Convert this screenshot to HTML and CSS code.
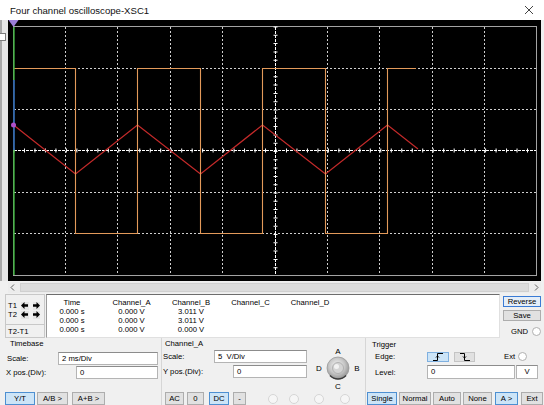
FILE: index.html
```html
<!DOCTYPE html>
<html lang="en">
<head>
<meta charset="utf-8">
<title>Four channel oscilloscope-XSC1</title>
<link rel="stylesheet" href="styles.css">
</head>
<body>
<div class="win">
  <header class="titlebar">
    <span class="title">Four channel oscilloscope-XSC1</span>
    <svg class="close" width="10" height="10" viewBox="0 0 10 10"><path d="M1 1L9 9M9 1L1 9" stroke="#444" stroke-width="1" fill="none"/></svg>
  </header>

  <div class="scoperow">
    <div class="edge"><div class="edgebox"></div></div>
    <div class="scope">
      <svg class="plot" width="533" height="261" viewBox="8 20 533 261">
        <rect x="13.5" y="26.5" width="523" height="249" fill="none" stroke="#a4a4a4"/>
        <path d="M65.5 27V275M117.5 27V275M170.5 27V275M222.5 27V275M327.5 27V275M379.5 27V275M432.5 27V275M484.5 27V275M14 68.5H536M14 109.5H536M14 192.5H536M14 233.5H536" stroke="#cfcfcf" stroke-dasharray="2 2" fill="none"/>
        <path d="M275.5 27V275M14 150.5H536" stroke="#ffffff" stroke-dasharray="3 1" fill="none"/>
        <path d="M13.5 150.5H537" stroke="#ffffff" stroke-width="4" stroke-dasharray="1 9.48" fill="none"/>
        <path d="M275.5 26.5V275.5" stroke="#ffffff" stroke-width="4" stroke-dasharray="1 7.3" fill="none"/>
        <path d="M13.5 125L75.5 174L137.5 125L200.5 174L262.5 125L325.5 174L387.5 125L418 149" stroke="#c42a2a" stroke-width="1.2" fill="none"/>
        <path d="M13.5 68.5H75.5V233.5H137.5V68.5H200.5V233.5H262.5V68.5H325.5V233.5H387.5V68.5H416" stroke="#e39a5a" stroke-width="1.1" fill="none"/>
        <path d="M14 27V275" stroke="#38b038" stroke-width="1.4" fill="none"/>
        <path d="M14 80V150" stroke="#2c4cc8" stroke-width="1.4" fill="none"/>
        <polygon points="8.5,20 18.5,20 13.5,27" fill="#9b7ed8"/>
        <circle cx="13.5" cy="125" r="2.5" fill="#b050c8"/>
      </svg>
    </div>
  </div>

  <div class="scrollbar">
    <svg class="sarrow" width="8" height="9" viewBox="0 0 8 9"><path d="M5 1.5L2 4.5L5 7.5" stroke="#606060" fill="none"/></svg>
    <div class="thumb"></div>
    <svg class="sarrow" width="8" height="9" viewBox="0 0 8 9"><path d="M3 1.5L6 4.5L3 7.5" stroke="#606060" fill="none"/></svg>
  </div>

  <div class="readrow">
    <div class="cursors">
      <div class="crow">
        <span class="clabel">T1</span>
        <span class="abtn"><svg width="7" height="7" viewBox="0 0 7 7"><path d="M0 3.5L3.5 0V2.3H7V4.7H3.5V7Z" fill="#000"/></svg></span>
        <span class="abtn"><svg width="7" height="7" viewBox="0 0 7 7"><path d="M7 3.5L3.5 0V2.3H0V4.7H3.5V7Z" fill="#000"/></svg></span>
      </div>
      <div class="crow">
        <span class="clabel">T2</span>
        <span class="abtn"><svg width="7" height="7" viewBox="0 0 7 7"><path d="M0 3.5L3.5 0V2.3H7V4.7H3.5V7Z" fill="#000"/></svg></span>
        <span class="abtn"><svg width="7" height="7" viewBox="0 0 7 7"><path d="M7 3.5L3.5 0V2.3H0V4.7H3.5V7Z" fill="#000"/></svg></span>
      </div>
      <div class="crow diff"><span>T2-T1</span></div>
    </div>
    <div class="readout">
      <div class="rgrid">
        <span>Time</span><span>Channel_A</span><span>Channel_B</span><span>Channel_C</span><span>Channel_D</span>
        <span>0.000 s</span><span>0.000 V</span><span>3.011 V</span><span></span><span></span>
        <span>0.000 s</span><span>0.000 V</span><span>3.011 V</span><span></span><span></span>
        <span>0.000 s</span><span>0.000 V</span><span>0.000 V</span><span></span><span></span>
      </div>
    </div>
    <div class="rbtns">
      <div class="rbtn focus">Reverse</div>
      <div class="rbtn">Save</div>
      <div class="gnd"><span>GND</span><span class="radio"></span></div>
    </div>
  </div>

  <div class="ctrlrow">
    <section class="grp tb">
      <div class="glabel">Timebase</div>
      <div class="frow tb-r1"><span class="fl">Scale:</span><span class="inp w100">2 ms/Div</span></div>
      <div class="frow tb-r2"><span class="fl">X pos.(Div):</span><span class="inp w82">0</span></div>
      <div class="brow tb-b">
        <span class="btn on b-yt">Y/T</span>
        <span class="btn b-ab">A/B &gt;</span>
        <span class="btn b-apb">A+B &gt;</span>
      </div>
    </section>

    <section class="grp ch">
      <div class="chtop">
        <div class="chfields">
          <div class="glabel">Channel_A</div>
          <div class="frow ch-r1"><span class="fl">Scale:</span><span class="inp w93">5&nbsp; V/Div</span></div>
          <div class="frow ch-r2"><span class="fl">Y pos.(Div):</span><span class="inp w74">0</span></div>
        </div>
        <svg class="knob" width="56" height="54" viewBox="0 0 56 54">
          <defs>
            <radialGradient id="kg" cx="0.45" cy="0.4" r="0.65">
              <stop offset="0" stop-color="#f6f6f6"/>
              <stop offset="0.55" stop-color="#c6c6c6"/>
              <stop offset="1" stop-color="#8a8a8a"/>
            </radialGradient>
          </defs>
          <circle cx="30" cy="30" r="11" fill="url(#kg)" stroke="#9a9a9a" stroke-width="0.8"/>
          <circle cx="30" cy="30" r="5.5" fill="#d4d4d4" stroke="#a8a8a8" stroke-width="0.8"/>
          <circle cx="28.5" cy="28.5" r="2.5" fill="#f2f2f2"/>
          <path d="M22 37.5A11 11 0 0 0 38 37.5" stroke="#3a3a3a" stroke-width="1.5" fill="none"/>
          <text x="30" y="16">A</text>
          <text x="49" y="33">B</text>
          <text x="30" y="51">C</text>
          <text x="11" y="33">D</text>
        </svg>
      </div>
      <div class="brow ch-b">
        <span class="btn b-ac">AC</span>
        <span class="btn b-0">0</span>
        <span class="btn on b-dc">DC</span>
        <span class="btn b-m">-</span>
        <span class="dim d1"></span>
        <span class="dim d2"></span>
        <span class="dim d3"></span>
        <span class="dim d4"></span>
      </div>
    </section>

    <section class="grp tr">
      <div class="glabel">Trigger</div>
      <div class="frow tr-r1">
        <span class="fl">Edge:</span>
        <span class="ebtn on"><svg width="12" height="8" viewBox="0 0 12 8"><path d="M1 7.5H5.5V0.5H11M4 4.5L5.5 3L7 4.5" stroke="#000" fill="none"/></svg></span>
        <span class="ebtn e2"><svg width="12" height="8" viewBox="0 0 12 8"><path d="M1 0.5H5.5V7.5H11M4 3.5L5.5 5L7 3.5" stroke="#000" fill="none"/></svg></span>
        <span class="ext">Ext</span>
        <span class="radio"></span>
      </div>
      <div class="frow tr-r2">
        <span class="fl">Level:</span>
        <span class="inp w88">0</span>
        <span class="unit">V</span>
      </div>
      <div class="brow tr-b">
        <span class="btn on t1">Single</span>
        <span class="btn t2">Normal</span>
        <span class="btn t3">Auto</span>
        <span class="btn t4">None</span>
        <span class="btn on t5">A &gt;</span>
        <span class="btn t6">Ext</span>
      </div>
    </section>
  </div>
</div>
</body>
</html>
```

FILE: styles.css
```css
* { box-sizing: border-box; }
html, body { margin: 0; padding: 0; }
body {
  width: 544px;
  height: 405px;
  overflow: hidden;
  background: #f0f0f0;
  font-family: "Liberation Sans", Arial, sans-serif;
  font-size: 7.7px;
  color: #000;
}
.win { display: flex; flex-direction: column; width: 544px; height: 405px; }

/* title bar */
.titlebar {
  flex: none;
  height: 20px;
  background: #fff;
  display: flex;
  align-items: center;
  justify-content: space-between;
  padding: 0 10px 0 10px;
}
.title { font-size: 9.6px; color: #111; }
.close { display: block; }

/* scope */
.scoperow { flex: none; display: flex; height: 261px; }
.edge {
  width: 8px;
  background: linear-gradient(to right, #a8a8a8 0, #a8a8a8 2px, #e6e6e6 2px);
  padding-top: 13px;
}
.edgebox { width: 6px; height: 8px; background: #fff; border: 1px solid #7c7c7c; border-left: none; }
.scope { width: 533px; height: 261px; background: #000; }
.plot { display: block; }

/* scrollbar */
.scrollbar {
  flex: none;
  height: 11px;
  margin: 1px 3px 0 8px;
  display: flex;
  align-items: center;
  background: #ececec;
}
.sarrow { display: block; flex: none; margin: 0 1px; }
.thumb { flex: 1; height: 9px; margin: 0 2px; background: #dcdcdc; border: 1px solid #d0d0d0; }

/* readout row */
.readrow { flex: none; display: flex; height: 44px; margin-top: 1px; padding-left: 5px; }
.cursors {
  width: 40px;
  height: 44px;
  border: 1px solid #c8c8c8;
  padding: 6px 0 0 2px;
  display: flex;
  flex-direction: column;
}
.crow { display: flex; align-items: center; height: 9px; }
.clabel { width: 14px; }
.abtn {
  width: 8px;
  height: 8px;
  margin-right: 4px;
  display: flex;
  align-items: center;
  justify-content: center;
  background: #e4e4e4;
}
.abtn svg { display: block; }
.crow.diff {
  height: 12px;
  margin: 5px 0 0 -2px;
  padding: 2px 0 0 2px;
  border-top: 1px solid #c8c8c8;
}
.readout {
  width: 454px;
  height: 44px;
  margin-left: 1px;
  background: #fff;
  border-top: 1px solid #6d6d6d;
  border-left: 1px solid #9a9a9a;
  border-right: 1px solid #e0e0e0;
  border-bottom: 1px solid #e0e0e0;
  padding-top: 2.5px;
  overflow: hidden;
}
.rgrid {
  display: grid;
  grid-template-columns: repeat(5, 59.5px);
  grid-auto-rows: 9px;
  line-height: 9px;
  margin-left: -4.75px;
  text-align: center;
}
.rbtns { width: 38px; margin-left: 3px; padding-top: 2px; display: flex; flex-direction: column; }
.rbtn {
  height: 11px;
  line-height: 9px;
  text-align: center;
  background: #e1e1e1;
  border: 1px solid #adadad;
}
.rbtn.focus { border-color: #3a7bd5; background: #e5eef8; }
.rbtn + .rbtn { margin-top: 3px; }
.gnd { display: flex; align-items: center; justify-content: flex-end; gap: 4px; margin-top: 6px; }
.radio {
  display: block;
  flex: none;
  width: 9px;
  height: 9px;
  border-radius: 50%;
  border: 1px solid #b0b0b0;
  background: #fff;
}

/* controls */
.ctrlrow { flex: none; height: 67px; display: flex; }
.grp { display: flex; flex-direction: column; }
.glabel { height: 12px; line-height: 12px; }
.frow { display: flex; align-items: center; height: 13px; }
.fl { flex: none; }
.inp {
  flex: none;
  height: 13px;
  line-height: 11px;
  background: #fff;
  border: 1px solid #b4b4b4;
  border-top-color: #8c8c8c;
  padding-left: 3px;
  white-space: pre;
}
.brow { display: flex; align-items: center; height: 13px; }
.btn {
  flex: none;
  height: 13px;
  line-height: 11px;
  text-align: center;
  background: #e1e1e1;
  border: 1px solid #adadad;
}
.btn.on { background: #cce4f7; border-color: #4d8fd1; }

/* timebase */
.tb { width: 161px; }
.tb .glabel { padding-left: 10px; }
.tb-r1 { margin-top: 2px; }
.tb-r1 .fl { width: 58px; padding-left: 7px; }
.tb-r2 { margin-top: 1px; }
.tb-r2 .fl { width: 76px; padding-left: 6px; }
.w100 { width: 100px; }
.w82 { width: 82px; }
.tb-b { margin-top: 13px; padding-left: 5px; }
.b-yt { width: 30px; }
.b-ab { width: 31px; margin-left: 2px; }
.b-apb { width: 33px; margin-left: 4px; }

/* channel */
.ch { width: 204px; border-left: 1px solid #d6d6d6; }
.chtop { display: flex; height: 54px; }
.chfields { width: 146px; display: flex; flex-direction: column; }
.ch .glabel { padding-left: 3px; }
.ch-r1 .fl { width: 52px; padding-left: 1px; }
.ch-r2 { margin-top: 2px; }
.ch-r2 .fl { width: 71px; padding-left: 1px; }
.w93 { width: 93px; }
.w74 { width: 74px; }
.knob { display: block; flex: none; }
.knob text {
  font-family: "Liberation Sans", Arial, sans-serif;
  font-size: 8px;
  text-anchor: middle;
  fill: #000;
}
.ch-b { padding-left: 3px; }
.b-ac { width: 19px; }
.b-0 { width: 17px; margin-left: 3px; }
.b-dc { width: 20px; margin-left: 5px; }
.b-m { width: 13px; margin-left: 4px; }
.dim {
  flex: none;
  width: 10px;
  height: 10px;
  border-radius: 50%;
  border: 1px solid #d6d6d6;
  background: #f6f6f6;
}
.d1 { margin-left: 22px; }
.d2 { margin-left: 11px; }
.d3 { margin-left: 15px; }
.d4 { margin-left: 16px; }

/* trigger */
.tr { width: 179px; border-left: 1px solid #d6d6d6; }
.tr .glabel { padding-left: 6px; height: 13px; line-height: 13px; }
.tr-r1 { height: 11px; }
.tr-r1 .fl, .tr-r2 .fl { width: 61px; padding-left: 9px; }
.ebtn {
  flex: none;
  width: 22px;
  height: 10px;
  display: flex;
  align-items: center;
  justify-content: center;
  background: #e1e1e1;
  border: 1px solid #c4c4c4;
}
.ebtn.on { background: #cce4f7; border-color: #7fb0e0; }
.ebtn svg { display: block; }
.e2 { width: 21px; margin-left: 5px; }
.ext { margin-left: 29px; margin-right: 3px; }
.tr-r2 { margin-top: 3px; height: 14px; }
.tr-r2 .inp { height: 14px; line-height: 12px; }
.w88 { width: 88px; }
.unit {
  flex: none;
  width: 22px;
  height: 14px;
  line-height: 12px;
  margin-left: 1px;
  text-align: center;
  background: #fff;
  border: 1px solid #b4b4b4;
  border-top-color: #8c8c8c;
}
.tr-b { margin-top: 13px; padding-left: 1px; }
.t1 { width: 30px; }
.t2 { width: 32px; margin-left: 2px; }
.t3 { width: 28px; margin-left: 2px; }
.t4 { width: 29px; margin-left: 2px; }
.t5 { width: 23px; margin-left: 3px; }
.t6 { width: 22px; margin-left: 3px; }
```
